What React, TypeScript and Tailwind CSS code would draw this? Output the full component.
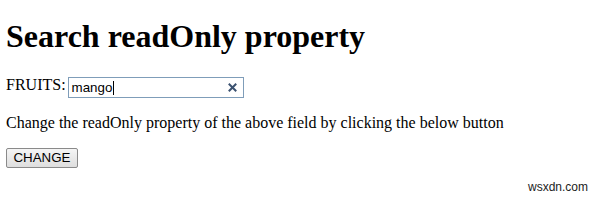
export default function App() {
  return (
    <div className="relative h-[201px] w-[600px] overflow-hidden bg-white pl-[6px] text-[16px] text-black font-['Liberation_Serif','Times_New_Roman',serif]">
      <h1 className="m-0 pt-[18px] text-[32px] font-bold leading-[37px]">Search readOnly property</h1>

      <div className="mt-[21px] flex items-start">
        <label className="leading-[18px]">FRUITS:</label>
        <div className="ml-[2px] mt-[1px] flex h-[21px] w-[176px] items-center border border-[#7f9db9] bg-white pl-[3px] pr-[6px] font-['Liberation_Sans',Arial,sans-serif] text-[13.33px]">
          <span className="leading-none">mango</span>
          <span className="ml-[1px] h-[14px] w-[1px] bg-black" />
          <svg className="ml-auto" width="9" height="9" viewBox="0 0 9 9">
            <path d="M1.5 1.5 L7.5 7.5 M7.5 1.5 L1.5 7.5" stroke="#3b5170" strokeWidth="2" strokeLinecap="square" />
          </svg>
        </div>
      </div>

      <p className="mt-[16px] leading-[18px]">
        Change the readOnly property of the above field by clicking the below button
      </p>

      <button className="mt-[16px] flex h-[20px] w-[72px] items-center justify-center rounded-[2px] border border-[#8a8a8a] bg-gradient-to-b from-[#f5f5f5] to-[#dedede] font-['Liberation_Sans',Arial,sans-serif] text-[13.33px] leading-none text-black">
        CHANGE
      </button>

      <span className="absolute bottom-[5px] right-[12px] font-['Liberation_Sans',Arial,sans-serif] text-[12px] text-[#222]">
        wsxdn.com
      </span>
    </div>
  )
}
